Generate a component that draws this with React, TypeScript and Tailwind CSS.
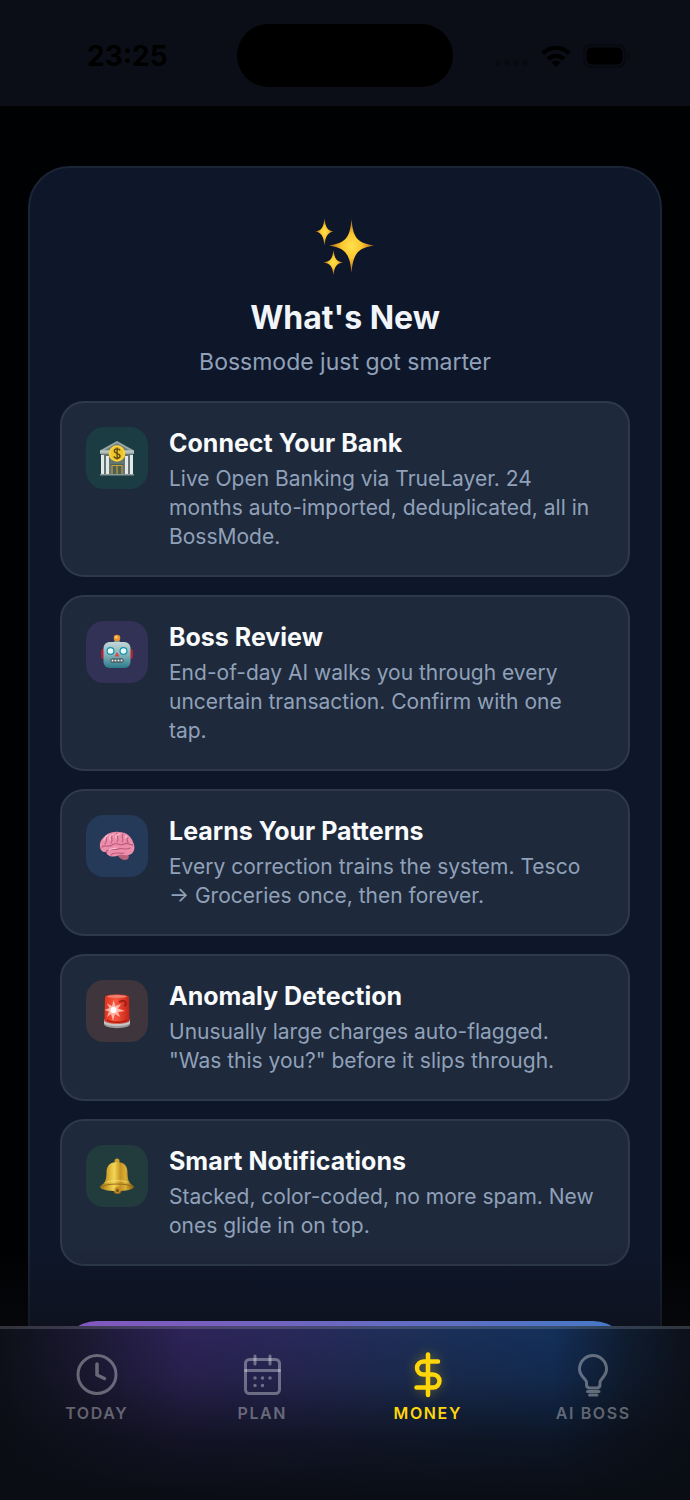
import React, { useState } from "react";

type FeatureType = {
  title: string;
  description: string;
  tileStyle: string;
  icon: React.ReactNode;
};

type TabType = {
  name: string;
  icon: React.ReactNode;
};

const SparklesIcon = () => (
  <svg viewBox="0 0 60 60" className="size-[60px]" aria-hidden="true">
    <defs>
      <radialGradient id="spark">
        <stop offset="0" stopColor="#ffe14d" />
        <stop offset="0.45" stopColor="#fcc62e" />
        <stop offset="1" stopColor="#a85f1c" />
      </radialGradient>
    </defs>
    <g fill="url(#spark)">
      <path d="M36.500 3C38 20 41 27 59 29.500C41 32 38 40 36.500 57C35 40 32 32 14 29.500C32 27 35 20 36.500 3Z" />
      <path d="M9.500 2.500C10.500 11 12 14.500 18.500 15.500C12 16.500 10.500 21 9.500 29.500C8.500 21 7 16.500 0.500 15.500C7 14.500 8.500 11 9.500 2.500Z" />
      <path d="M18.500 34C19.500 42 21 45.500 28 46.500C21 47.500 19.500 51 18.500 59C17.500 51 16 47.500 8.500 46.500C16 45.500 17.500 42 18.500 34Z" />
    </g>
  </svg>
);

const BankIcon = () => (
  <svg viewBox="0 0 36 36" className="size-9" aria-hidden="true">
    <path d="M1 10.500L18 1L35 10.500V14H1Z" fill="#9aa8a6" />
    <path d="M5 10.500L18 3L31 10.500Z" fill="#6f8080" />
    <path d="M2 14H34V35H2Z" fill="#647473" />
    <path d="M1 10.500H35V12.500H1Z" fill="#bcc7c6" />
    <g fill="#e3e9ea">
      <path d="M2 15h3v19H2zM7 16h3v18H7zM26 16h3v18h-3zM31 15h3v19h-3z" />
    </g>
    <path d="M12 24H24V34H12Z" fill="#4f5f54" />
    <path d="M13 34V25.500H23V34M18 25.500V34" fill="none" stroke="#c2a03c" strokeWidth="1.200" />
    <path d="M1 34H35V35.500H1Z" fill="#899795" />
    <circle cx="18" cy="13.500" r="8.300" fill="#f2c529" />
    <circle cx="18" cy="13.500" r="7.200" fill="none" stroke="#ffdf58" strokeWidth="0.800" />
    <path
      d="M21 10.500C20.300 8.300 15.300 8.300 15.300 11C15.300 14 21 12.800 21 16C21 18.800 15.500 18.800 15 16.300M18.100 7.500V19.500"
      fill="none"
      stroke="#5b4a12"
      strokeWidth="1.400"
    />
  </svg>
);

const RobotIcon = () => (
  <svg viewBox="0 0 36 36" className="size-9" aria-hidden="true">
    <defs>
      <linearGradient id="robotFace" x1="0" y1="0" x2="0" y2="1">
        <stop offset="0" stopColor="#c5d6d8" />
        <stop offset="0.5" stopColor="#83b2ba" />
        <stop offset="1" stopColor="#297b8b" />
      </linearGradient>
    </defs>
    <rect x="2" y="15" width="5" height="10" rx="2" fill="#a92434" />
    <rect x="29" y="15" width="5" height="10" rx="2" fill="#a92434" />
    <path d="M16 6H20L22 9H14Z" fill="#6c9aa3" />
    <circle cx="18" cy="4" r="3.300" fill="#e8932f" />
    <circle cx="17.300" cy="3.200" r="1.300" fill="#ffd27a" />
    <rect x="4.500" y="8" width="27" height="26" rx="6" fill="url(#robotFace)" />
    <circle cx="11.500" cy="17" r="4" fill="#1591a6" />
    <circle cx="24.500" cy="17" r="4" fill="#1591a6" />
    <circle cx="11.500" cy="17" r="2.800" fill="#e6fbfc" />
    <circle cx="24.500" cy="17" r="2.800" fill="#e6fbfc" />
    <path d="M18 18L20.500 22.500H15.500Z" fill="#d84a46" />
    <rect x="11.500" y="24.500" width="13" height="4" rx="1.500" fill="#31444b" />
    <path d="M12.500 26.500H23.500" stroke="#f0eee6" strokeWidth="2.200" strokeDasharray="2 1" />
  </svg>
);

const BrainIcon = () => (
  <svg viewBox="0 0 36 36" className="size-9" aria-hidden="true">
    <path d="M18 25C19 29 22 32 26 32C30 32 31 28 28 25Z" fill="#b9647b" />
    <path
      d="M3 23C0 20 0 14 4 10C8 5 14 3 20 4C27 4 32 8 34 14C37 20 35 26 30 27C26 28 23 26 20 27C16 29 12 29 9 27C7 26 8 24 7 24C5 24 4 24 3 23Z"
      fill="#ec8dab"
    />
    <path
      d="M8 8C6 11 9 13 6 16M13 6C11 9 15 11 12 15M18 5C17 9 21 10 18 14M24 6C21 9 26 10 23 14M29 10C26 12 30 13 29 16M3 19C6 16 9 20 13 17C18 13 21 19 25 16C28 14 31 17 34 17M7 24C10 19 15 23 19 21C23 19 26 23 31 20M12 27C15 23 20 26 25 25"
      fill="none"
      stroke="#bb5a7c"
      strokeWidth="1.100"
      strokeLinecap="round"
    />
    <path
      d="M5 12C6 10 7 8 9 7M11 12C10 9 12 7 14 6M17 10C16 8 18 6 21 6M27 10C26 8 27 8 28 8M10 22C13 20 15 21 17 20"
      fill="none"
      stroke="#ffc3d2"
      strokeWidth="1.100"
      strokeLinecap="round"
    />
  </svg>
);

const SirenIcon = () => (
  <svg viewBox="0 0 36 36" className="size-9" aria-hidden="true">
    <defs>
      <linearGradient id="siren" x1="0" y1="0" x2="1" y2="0">
        <stop offset="0" stopColor="#e0331f" />
        <stop offset="0.45" stopColor="#f9543c" />
        <stop offset="1" stopColor="#c32316" />
      </linearGradient>
    </defs>
    <path d="M5 27C5 24 31 24 31 27V31C31 36.500 5 36.500 5 31Z" fill="#9c9b9b" />
    <path d="M5 28C8 32 28 32 31 28V30C28 34 8 34 5 30Z" fill="#c9c7c4" />
    <path d="M6 4C6 0.500 30 0.500 30 4L30.500 27C30 32 6 32 5.500 27Z" fill="url(#siren)" />
    <ellipse cx="18" cy="3.500" rx="10" ry="1.500" fill="#f0806f" />
    <path d="M20 9C27 5 29 12 25 13" fill="none" stroke="#a31e16" strokeWidth="2" />
    <path
      d="M14.500 7L16.500 13L22 11L19 15.500L26 18L19 19L21 24L16 21L14 28L12 21L8 24L10 18.500L5.500 17L10.500 15L8 10.500L13 13Z"
      fill="#ffb5a7"
    />
    <circle cx="14.500" cy="17" r="3" fill="#ffffff" />
    <path d="M8 27C12 30 24 30 28 27" fill="none" stroke="#a61b12" strokeWidth="1.300" />
  </svg>
);

const BellIcon = () => (
  <svg viewBox="0 0 36 36" className="size-9" aria-hidden="true">
    <defs>
      <linearGradient id="bell" x1="0" y1="0" x2="1" y2="0">
        <stop offset="0" stopColor="#9c6f17" />
        <stop offset="0.3" stopColor="#e2bb3a" />
        <stop offset="0.42" stopColor="#f2d558" />
        <stop offset="0.6" stopColor="#c69322" />
        <stop offset="0.75" stopColor="#d8ae36" />
        <stop offset="1" stopColor="#7f5810" />
      </linearGradient>
    </defs>
    <circle cx="18" cy="3" r="2.500" fill="#d2a12a" />
    <circle cx="18.500" cy="32" r="4" fill="#9c6b19" />
    <path
      d="M18 4C25 4 28.500 8 28.500 14C28.500 22 30 25 34.500 28C37 31 28 33 18 33C8 33 -1 31 1.500 28C6 25 7.500 22 7.500 14C7.500 8 11 4 18 4Z"
      fill="url(#bell)"
    />
    <path d="M2 29C8 25 28 25 34 29" fill="none" stroke="#9b6f18" strokeWidth="1.200" />
    <path d="M6.500 24.500C12 22 24 22 29.500 24.500" fill="none" stroke="#f8df73" strokeWidth="0.800" />
    <circle cx="18.500" cy="32" r="3" fill="#c48d26" />
    <circle cx="18.500" cy="32.500" r="1.500" fill="#76500f" />
  </svg>
);

const tabIconProps = {
  viewBox: "0 0 48 48",
  className: "size-12",
  fill: "none",
  stroke: "currentColor",
  strokeWidth: 3,
  strokeLinecap: "round" as const,
  strokeLinejoin: "round" as const,
  "aria-hidden": true,
};

const featureList: FeatureType[] = [
  {
    title: "Connect Your Bank",
    description:
      "Live Open Banking via TrueLayer. 24 months auto-imported, deduplicated, all in BossMode.",
    tileStyle: "bg-[#1c3c44]",
    icon: <BankIcon />,
  },
  {
    title: "Boss Review",
    description:
      "End-of-day AI walks you through every uncertain transaction. Confirm with one tap.",
    tileStyle: "bg-[#313256]",
    icon: <RobotIcon />,
  },
  {
    title: "Learns Your Patterns",
    description:
      "Every correction trains the system. Tesco → Groceries once, then forever.",
    tileStyle: "bg-[#253a58]",
    icon: <BrainIcon />,
  },
  {
    title: "Anomaly Detection",
    description:
      'Unusually large charges auto-flagged. "Was this you?" before it slips through.',
    tileStyle: "bg-[#3e363c]",
    icon: <SirenIcon />,
  },
  {
    title: "Smart Notifications",
    description:
      "Stacked, color-coded, no more spam. New ones glide in on top.",
    tileStyle: "bg-[#223c3e]",
    icon: <BellIcon />,
  },
];

const tabList: TabType[] = [
  {
    name: "TODAY",
    icon: (
      <svg {...tabIconProps}>
        <circle cx="24" cy="23.500" r="19" />
        <path d="M24 13V24L31.500 27.500" strokeWidth="3.500" />
      </svg>
    ),
  },
  {
    name: "PLAN",
    icon: (
      <svg {...tabIconProps}>
        <rect x="7.500" y="8.500" width="34" height="34" rx="4" />
        <path d="M7.500 19.500H41.500" />
        <path d="M17 5V13" />
        <path d="M32 5V13" />
        <path d="M17 27h.01M24.500 27h.01M32 27h.01M17 34.500h.01M24.500 34.500h.01" strokeWidth="3.500" />
      </svg>
    ),
  },
  {
    name: "MONEY",
    icon: (
      <svg
        {...tabIconProps}
        strokeWidth={4.5}
        className="size-12 drop-shadow-[0_0_6px_rgba(255,214,10,0.35)]"
      >
        <path d="M24 3.500V44" />
        <path d="M34 10.500H19.500a6.500 6.500 0 0 0 0 13H29a6.500 6.500 0 0 1 0 13H12.500" />
      </svg>
    ),
  },
  {
    name: "AI BOSS",
    icon: (
      <svg {...tabIconProps}>
        <path d="M17.500 33.500V31C17.500 28 10.500 25.500 10.500 18a13.500 13.500 0 0 1 27 0C37.500 25.500 31 28 31 31V33.500C31 36 29.500 37 27.500 37H21C19 37 17.500 36 17.500 33.500Z" />
        <path d="M18.500 40.500H30M20.500 44H28" />
      </svg>
    ),
  },
];

const StatusBar = () => (
  <header className="grid shrink-0 grid-cols-[1fr_216px_1fr] items-center bg-[#0b0e16] pt-6 pb-[19px] text-black">
    <time className="pl-[87px] text-[28px] leading-8 font-bold">23:25</time>
    <div className="h-[63px] rounded-full bg-black" />
    <div className="flex items-center justify-end gap-3 pr-[60px]">
      <svg viewBox="0 0 34 22" className="h-[22px] w-[34px]" fill="#070a11" aria-hidden="true">
        <circle cx="3" cy="18" r="2.500" />
        <circle cx="12" cy="18" r="2.500" />
        <circle cx="21" cy="18" r="2.500" />
        <circle cx="30" cy="18" r="2.500" />
      </svg>
      <svg viewBox="0 0 30 22" className="h-[22px] w-[30px]" aria-hidden="true">
        <path d="M15 22L10.500 17.200C13 15 17 15 19.500 17.200Z" />
        <path
          d="M7 14C11.500 9.700 18.500 9.700 23 14M2 8.300C9.500 1 20.500 1 28 8.300"
          fill="none"
          stroke="currentColor"
          strokeWidth="4.300"
        />
      </svg>
      <svg viewBox="0 0 47 24" className="h-6 w-[47px]" aria-hidden="true">
        <rect x="1" y="1" width="41" height="22" rx="7" fill="none" stroke="#07090f" strokeWidth="2" />
        <rect x="3.500" y="3.500" width="36" height="17" rx="5" />
        <path d="M44 9C47 10 47 14 44 15Z" fill="#07090f" />
      </svg>
    </div>
  </header>
);

const FeatureCard = ({ title, description, tileStyle, icon }: FeatureType) => (
  <li className="flex items-start gap-[21px] rounded-3xl border-2 border-[#2e3a4c] bg-[#1e293b] p-6">
    <div
      className={`${tileStyle} flex size-[62px] shrink-0 items-center justify-center rounded-[18px]`}
    >
      {icon}
    </div>
    <div className="min-w-0 flex-1">
      <h2 className="text-[25px] leading-[33px] font-bold text-slate-50">{title}</h2>
      <p className="mt-1 text-[21px] leading-[29px] text-slate-400">{description}</p>
    </div>
  </li>
);

const App = () => {
  const [activeTab, setActiveTab] = useState<string>("MONEY");

  return (
    <div className="flex h-screen flex-col bg-[#000102] font-['Inter','Liberation_Sans',sans-serif]">
      <StatusBar />

      <main className="relative min-h-0 flex-1 overflow-hidden px-7 pt-[60px]">
        <section className="rounded-[42px] border-2 border-[#1b2536] bg-[#0e172a] px-[30px] pt-12 pb-8">
          <div className="flex flex-col items-center text-center">
            <SparklesIcon />
            <h1 className="mt-[22px] text-[32px] leading-10 font-bold text-slate-100">
              What's New
            </h1>
            <p className="mt-2 text-[23px] leading-8 text-slate-400">Bossmode just got smarter</p>
          </div>
          <ul className="mt-[23px] flex flex-col gap-[18px]">
            {featureList.map((feature) => (
              <FeatureCard key={feature.title} {...feature} />
            ))}
          </ul>
          <button
            type="button"
            aria-label="Continue"
            className="relative z-10 mt-[55px] block h-[74px] w-full rounded-full bg-linear-to-r from-[#8355bd] to-[#4379c6]"
          />
        </section>
        {/* shade that the tab bar throws on the sheet */}
        <div className="pointer-events-none absolute inset-x-0 bottom-0 h-20 bg-linear-to-b from-transparent to-[#0d0d14]/50" />
      </main>

      <nav className="grid shrink-0 grid-cols-4 border-t-3 border-white/15 bg-[linear-gradient(to_bottom,rgba(10,13,20,0)_0%,rgba(10,13,20,0.2)_30%,rgba(10,13,20,0.75)_65%,#0a0d14_100%),linear-gradient(to_right,#0d1018_0%,#1a1830_11%,#2e2459_27%,#29295a_42%,#1c3059_62%,#14305b_80%,#0f1c30_91%,#0c111a_100%)] bg-origin-border px-[14px] pt-[22px] pb-[77px]">
        {tabList.map((tab) => (
          <button
            key={tab.name}
            type="button"
            onClick={() => setActiveTab(tab.name)}
            className={`${
              tab.name === activeTab ? "text-[#ffd60a]" : "text-white/35"
            } flex flex-col items-center`}
          >
            {tab.icon}
            <span className="mt-1 text-base leading-5 font-semibold tracking-widest">
              {tab.name}
            </span>
          </button>
        ))}
      </nav>
    </div>
  );
};

export default App;
